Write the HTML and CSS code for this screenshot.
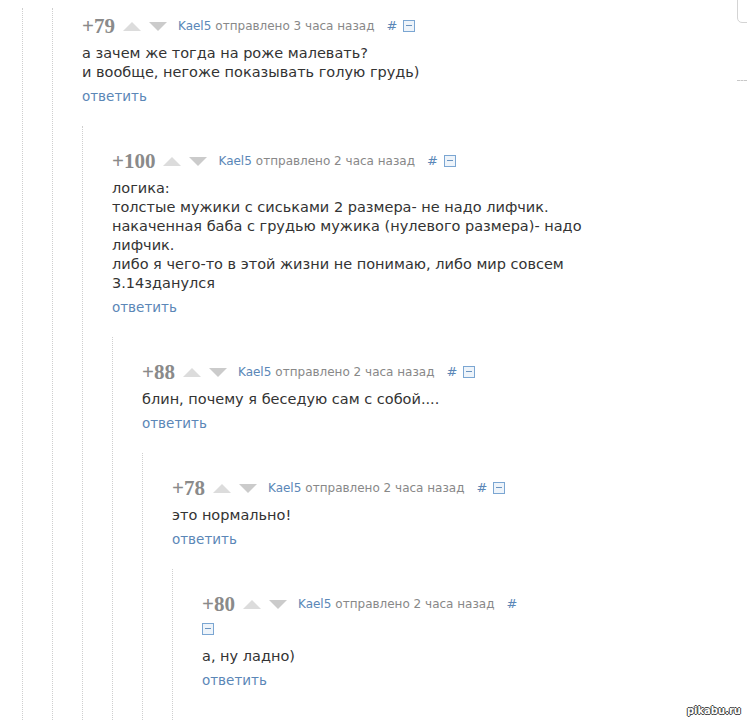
FILE: index.html
```html
<!DOCTYPE html>
<html lang="ru">
<head>
    <meta charset="UTF-8">
    <meta name="viewport" content="width=device-width, initial-scale=1.0">
    <title>Комментарии</title>
    <link rel="stylesheet" href="styles.css">
</head>
<body>
    <!-- edge of the neighbouring block, cut off by the screenshot -->
    <div class="edge-box"></div>
    <div class="edge-dash"></div>

    <div class="thread">
      <div class="branch first">

        <div class="comment">
          <div class="comment-head">
            <span class="score">+79</span>
            <span class="vote up"></span>
            <span class="vote down"></span>
            <a class="author" href="#">Kael5</a>
            <span class="time">отправлено 3 часа назад</span>
            <a class="hash" href="#">#</a>
            <span class="collapse"></span>
          </div>
          <div class="comment-body">а зачем же тогда на роже малевать?<br>и вообще, негоже показывать голую грудь)</div>
          <a class="reply" href="#">ответить</a>

          <div class="branch">
            <div class="comment">
              <div class="comment-head">
                <span class="score">+100</span>
                <span class="vote up"></span>
                <span class="vote down"></span>
                <a class="author" href="#">Kael5</a>
                <span class="time">отправлено 2 часа назад</span>
                <a class="hash" href="#">#</a>
                <span class="collapse"></span>
              </div>
              <div class="comment-body">логика:<br>толстые мужики с сиськами 2 размера- не надо лифчик.<br>накаченная баба с грудью мужика (нулевого размера)- надо лифчик.<br>либо я чего-то в этой жизни не понимаю, либо мир совсем 3.14зданулся</div>
              <a class="reply" href="#">ответить</a>

              <div class="branch">
                <div class="comment">
                  <div class="comment-head">
                    <span class="score">+88</span>
                    <span class="vote up"></span>
                    <span class="vote down"></span>
                    <a class="author" href="#">Kael5</a>
                    <span class="time">отправлено 2 часа назад</span>
                    <a class="hash" href="#">#</a>
                    <span class="collapse"></span>
                  </div>
                  <div class="comment-body">блин, почему я беседую сам с собой....</div>
                  <a class="reply" href="#">ответить</a>

                  <div class="branch">
                    <div class="comment">
                      <div class="comment-head">
                        <span class="score">+78</span>
                        <span class="vote up"></span>
                        <span class="vote down"></span>
                        <a class="author" href="#">Kael5</a>
                        <span class="time">отправлено 2 часа назад</span>
                        <a class="hash" href="#">#</a>
                        <span class="collapse"></span>
                      </div>
                      <div class="comment-body">это нормально!</div>
                      <a class="reply" href="#">ответить</a>

                      <div class="branch last">
                        <div class="comment">
                          <div class="comment-head">
                            <span class="score">+80</span>
                            <span class="vote up"></span>
                            <span class="vote down"></span>
                            <a class="author" href="#">Kael5</a>
                            <span class="time">отправлено 2 часа назад</span>
                            <a class="hash" href="#">#</a>
                            <span class="collapse"></span>
                          </div>
                          <div class="comment-body">а, ну ладно)</div>
                          <a class="reply" href="#">ответить</a>
                        </div>
                      </div>

                    </div>
                  </div>

                </div>
              </div>

            </div>
          </div>

        </div>

      </div>
    </div>

    <div class="watermark">pikabu.ru</div>
</body>
</html>
```

FILE: styles.css
```css
/* General Styles */
body {
    margin: 0;
    background: #fff;
    font-family: 'DejaVu Sans', Verdana, sans-serif;
    color: #333;
    overflow: hidden;
}

a {
    text-decoration: none;
}

/* Thread lines */
.thread {
    width: 553px;
    margin-left: 22px;
    border-left: 1px dotted #cfcfcf;
    padding-left: 29px;
}

.branch {
    border-left: 1px dotted #cfcfcf;
    padding-left: 29px;
    margin-right: 20px;
    margin-top: 20px;
    padding-top: 24px;
}

.branch.first {
    margin-top: 8px;
    padding-top: 7px;
    margin-right: 0;
}

.branch.last {
    padding-bottom: 32px;
}

/* Comment header */
.comment-head {
    display: flex;
    flex-wrap: wrap;
    align-items: center;
    row-gap: 3px;
    min-height: 22px;
    font-size: 12px;
    line-height: 22px;
}

.score {
    font-family: 'Liberation Serif', 'Times New Roman', serif;
    font-weight: bold;
    font-size: 21px;
    color: #8a8a8a;
    margin-right: 8px;
}

.vote {
    width: 0;
    height: 0;
    border-left: 9px solid transparent;
    border-right: 9px solid transparent;
    margin-right: 8px;
}

.vote.up {
    border-bottom: 9px solid #dcdcdc;
}

.vote.down {
    border-top: 9px solid #cbcbcb;
    margin-right: 11px;
}

.author {
    color: #5b87b7;
    margin-right: 4px;
}

.time {
    color: #888;
    margin-right: 12px;
}

.hash {
    color: #5b87b7;
    font-size: 13px;
    margin-right: 6px;
}

.collapse {
    position: relative;
    width: 10px;
    height: 10px;
    border: 1px solid #7ba6d2;
    background: #eef4fa;
    margin: 5px 2px 5px 0;
}

.collapse::after {
    content: "";
    position: absolute;
    left: 2px;
    right: 2px;
    top: 4px;
    height: 1px;
    background: #6b94c0;
}

/* Comment content */
.comment-body {
    margin-top: 7px;
    font-size: 14.5px;
    line-height: 19px;
    color: #333;
}

.reply {
    display: inline-block;
    margin-top: 5px;
    font-size: 13.5px;
    line-height: 19px;
    color: #5b87b7;
}

/* Cut-off bits at the right edge */
.edge-box {
    position: absolute;
    left: 737px;
    top: -12px;
    width: 30px;
    height: 33px;
    border: 1px solid #d4d4d4;
    border-radius: 5px;
}

.edge-dash {
    position: absolute;
    left: 737px;
    top: 80px;
    width: 10px;
    border-top: 1px dashed #c8c8c8;
}

.watermark {
    position: absolute;
    right: 6px;
    bottom: 4px;
    font-family: 'DejaVu Sans', sans-serif;
    font-size: 10px;
    font-weight: bold;
    color: #fff;
    text-shadow: 1px 0 0 #444, -1px 0 0 #444, 0 1px 0 #444, 0 -1px 0 #444;
}
```
